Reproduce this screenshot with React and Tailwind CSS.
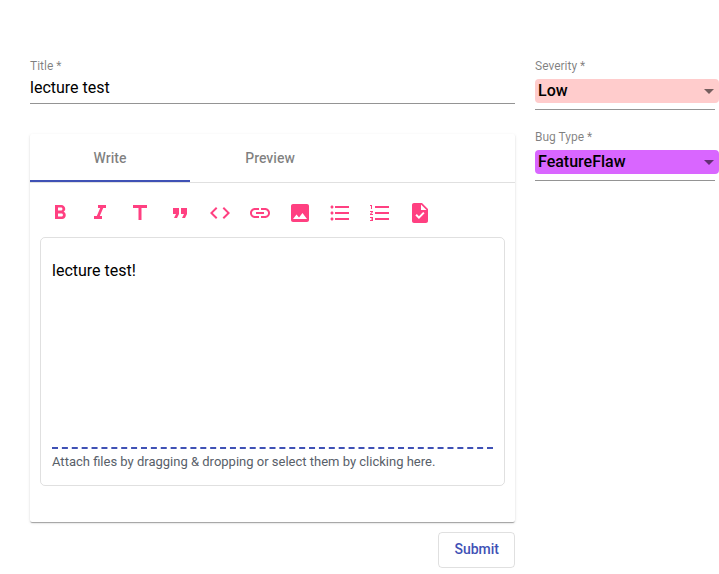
import React, { useState } from "react";

const TOOLS = [
  { name: "Bold", path: "M15.6 10.79c.97-.67 1.65-1.77 1.65-2.79 0-2.26-1.75-4-4-4H7v14h7.04c2.09 0 3.71-1.7 3.71-3.79 0-1.52-.86-2.82-2.15-3.42zM10 6.5h3c.83 0 1.5.67 1.5 1.5s-.67 1.5-1.5 1.5h-3v-3zm3.5 9H10v-3h3.5c.83 0 1.5.67 1.5 1.5s-.67 1.5-1.5 1.5z" },
  { name: "Italic", path: "M10 4v3h2.21l-3.42 8H6v3h8v-3h-2.21l3.42-8H18V4z" },
  { name: "Heading", path: "M5 4v3h5.5v12h3V7H19V4z" },
  { name: "Quote", path: "M6 17h3l2-4V7H5v6h3zm8 0h3l2-4V7h-6v6h3z" },
  { name: "Code", path: "M9.4 16.6L4.8 12l4.6-4.6L8 6l-6 6 6 6 1.4-1.4zm5.2 0l4.6-4.6-4.6-4.6L16 6l6 6-6 6-1.4-1.4z" },
  { name: "Link", path: "M3.9 12c0-1.71 1.39-3.1 3.1-3.1h4V7H7c-2.76 0-5 2.24-5 5s2.24 5 5 5h4v-1.9H7c-1.71 0-3.1-1.39-3.1-3.1zM8 13h8v-2H8v2zm9-6h-4v1.9h4c1.71 0 3.1 1.39 3.1 3.1s-1.39 3.1-3.1 3.1h-4V17h4c2.76 0 5-2.24 5-5s-2.24-5-5-5z" },
  { name: "Image", path: "M21 19V5c0-1.1-.9-2-2-2H5c-1.1 0-2 .9-2 2v14c0 1.1.9 2 2 2h14c1.1 0 2-.9 2-2zM8.5 13.5l2.5 3.01L14.5 12l4.5 6H5l3.5-4.5z" },
  { name: "Bulleted list", path: "M4 10.5c-.83 0-1.5.67-1.5 1.5s.67 1.5 1.5 1.5 1.5-.67 1.5-1.5-.67-1.5-1.5-1.5zm0-6c-.83 0-1.5.67-1.5 1.5S3.17 7.5 4 7.5 5.5 6.83 5.5 6 4.83 4.5 4 4.5zm0 12c-.83 0-1.5.68-1.5 1.5s.68 1.5 1.5 1.5 1.5-.68 1.5-1.5-.67-1.5-1.5-1.5zM7 19h14v-2H7v2zm0-6h14v-2H7v2zm0-8v2h14V5H7z" },
  { name: "Numbered list", path: "M2 17h2v.5H3v1h1v.5H2v1h3v-4H2v1zm1-9h1V4H2v1h1v3zm-1 3h1.8L2 13.1v.9h3v-1H3.2L5 10.9V10H2v1zm5-6v2h14V5H7zm0 14h14v-2H7v2zm0-6h14v-2H7v2z" },
  { name: "Task list", path: "M14 2H6c-1.1 0-1.99.9-1.99 2L4 20c0 1.1.89 2 1.99 2H18c1.1 0 2-.9 2-2V8l-6-6zm-3.06 16L7.4 14.46l1.41-1.41 2.12 2.12 4.24-4.24 1.41 1.41L10.94 18zM13 9V3.500L18.5 9H13z" },
];

function SelectField({ id, label, options, tone }) {
  return (
    <div>
      <label htmlFor={id} className="block pt-2 pb-[5px] text-xs leading-4 text-black/50">
        {label} *
      </label>
      <div className="border-b border-[#949494] pb-1.5">
        <div className={`relative -mr-1 rounded ${tone}`}>
          <select id={id} className="block h-6 w-full appearance-none bg-transparent pr-6 pl-[3px] text-base leading-6 font-medium text-black outline-none">
            {options.map((option) => (
              <option key={option}>{option}</option>
            ))}
          </select>
          <span className="pointer-events-none absolute top-2.5 right-[5px] border-x-5 border-t-5 border-x-transparent border-t-black/54" />
        </div>
      </div>
    </div>
  );
}

function Tab({ active, children, onClick }) {
  return (
    <button
      type="button"
      role="tab"
      aria-selected={active}
      onClick={onClick}
      className={`h-12 w-40 border-b-2 pt-0.5 text-sm font-medium text-black/50 ${active ? "border-[#3f51b5]" : "border-transparent"}`}
    >
      {children}
    </button>
  );
}

export default function App() {
  const [tab, setTab] = useState("write");
  const [text, setText] = useState("lecture test!");

  return (
    <form
      onSubmit={(event) => event.preventDefault()}
      className="flex items-start gap-5 bg-white pt-[50px] pr-1 pb-1.5 pl-[30px] font-['Roboto',sans-serif]"
    >
      <main className="min-w-0 flex-1">
        <label htmlFor="title" className="block pt-2 pb-0.5 text-xs leading-4 text-black/50">
          Title *
        </label>
        <input
          id="title"
          defaultValue="lecture test"
          className="block w-full border-b border-[#949494] pb-[3px] text-base leading-6 text-black outline-none"
        />

        <section className="mt-[30px] rounded-xs bg-white pb-9 shadow-[0_2px_1px_-1px_rgba(0,0,0,0.2),0_1px_1px_0_rgba(0,0,0,0.14),0_1px_3px_0_rgba(0,0,0,0.12)]">
          <div role="tablist" className="flex border-b border-black/12">
            <Tab active={tab === "write"} onClick={() => setTab("write")}>Write</Tab>
            <Tab active={tab === "preview"} onClick={() => setTab("preview")}>Preview</Tab>
          </div>

          <div className="px-2.5 pt-2.5">
            <div className="flex pb-1">
              {TOOLS.map((tool) => (
                <button key={tool.name} type="button" aria-label={tool.name} className="flex size-10 items-center justify-center text-[#ff4081]">
                  <svg viewBox="0 0 24 24" className="size-6 fill-current" aria-hidden="true">
                    <path d={tool.path} />
                  </svg>
                </button>
              ))}
            </div>

            <div className="rounded-[5px] border border-black/12 px-[11px] pt-[21px] pb-2.5">
              {tab === "write" ? (
                <textarea
                  aria-label="Description"
                  value={text}
                  onChange={(event) => setText(event.target.value)}
                  className="block h-[188px] w-full resize-none text-base leading-6 text-black outline-none"
                />
              ) : (
                <p className="h-[188px] text-base leading-6 text-black">{text}</p>
              )}
              <button type="button" className="block w-full border-t-2 border-dashed border-[#3f51b5] py-[3px] text-left text-[13px] leading-5 text-[#586069]">
                Attach files by dragging &amp; dropping or select them by clicking here.
              </button>
            </div>
          </div>
        </section>

        <div className="flex justify-end pt-2.5">
          <button type="submit" className="h-9 rounded border border-black/12 px-[15px] pb-0.5 text-sm font-medium text-[#3f51b5]">
            Submit
          </button>
        </div>
      </main>

      <aside className="flex w-45 flex-col gap-[11px]">
        <SelectField id="severity" label="Severity" options={["Low", "Medium", "High"]} tone="bg-[#ffcccc]" />
        <SelectField id="bug-type" label="Bug Type" options={["FeatureFlaw", "FunctionalityBug", "DocumentationBug"]} tone="bg-[#d966ff]" />
      </aside>
    </form>
  );
}
